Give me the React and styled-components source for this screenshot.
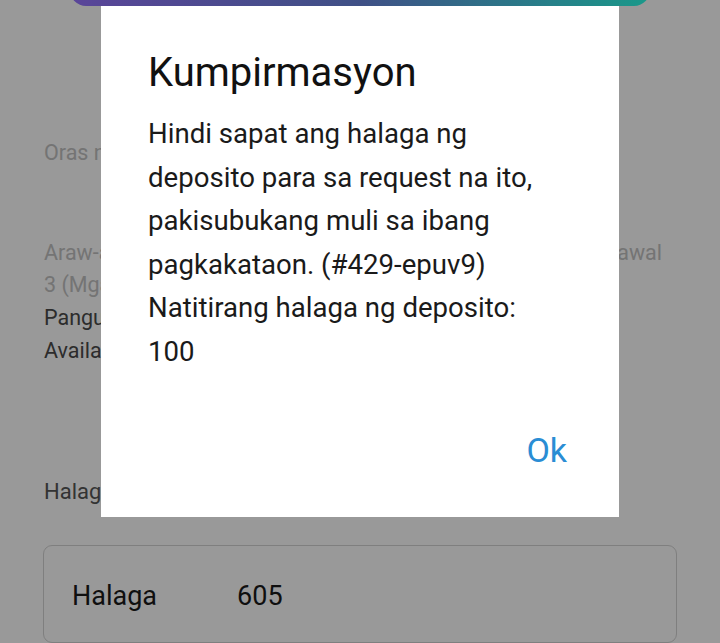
import React from 'react'
import styled, { createGlobalStyle } from 'styled-components';

const GlobalStyle = createGlobalStyle`
  html, body {
    margin:0;
    padding:0;
  }
  body {
    font-family:Roboto, "Noto Sans", Arial, sans-serif;
    background:#fff;
  }
`;

function App() {
  const message = "Hindi sapat ang halaga ng\ndeposito para sa request na ito,\npakisubukang muli sa ibang\npagkakataon. (#429-epuv9)\nNatitirang halaga ng deposito:\n100";

  return (
    <Page>
      <GlobalStyle />
      <SubmitBar />

      <Info>
        <Hint>Oras ng</Hint>
        <LimitBlock>
          <LimitRow>
            <Hint as="span">Araw-araw</Hint>
            <Hint as="span">withdrawal</Hint>
          </LimitRow>
          <Hint>3 (Mga</Hint>
          <Detail>Pangunang</Detail>
          <Detail>Available</Detail>
        </LimitBlock>
      </Info>

      <Label>Halaga</Label>
      <AmountBox>
        <span>Halaga</span>
        <AmountValue>605</AmountValue>
      </AmountBox>

      <Overlay>
        <Dialog>
          <Title>Kumpirmasyon</Title>
          <Message>{message}</Message>
          <Actions>
            <OkButton>Ok</OkButton>
          </Actions>
        </Dialog>
      </Overlay>
    </Page>
  )
}

export default App

const Page = styled.div`
  position:relative;
  width:720px;
  height:643px;
  overflow:hidden;
  background:#fff;
  display:flex;
  flex-direction:column;
`;

const SubmitBar = styled.div`
  flex:none;
  height:52px;
  margin:-46px 70px 0;
  border-radius:0 0 16px 16px;
  background:linear-gradient(90deg, #9674ff 0%, #6a86e0 50%, #2bffe6 100%);
`;

const Info = styled.div`
  padding:0 44px;
  display:flex;
  flex-direction:column;
`;

const Hint = styled.div`
  font-size:21.5px;
  line-height:32px;
  color:#c2c2c2;
  white-space:nowrap;
  &:first-child {
    margin-top:131px;
  }
`;

const LimitBlock = styled.div`
  margin-top:68px;
  display:flex;
  flex-direction:column;
  ${Hint}:first-child { margin-top:0; }
`;

const LimitRow = styled.div`
  display:flex;
  justify-content:space-between;
  padding-right:14px;
  ${Hint} { margin-top:0; }
`;

const Detail = styled.div`
  font-size:21.5px;
  line-height:33px;
  color:#4a4a4a;
  white-space:nowrap;
`;

const Label = styled.div`
  margin:109px 44px 0;
  font-size:22px;
  line-height:32px;
  color:#555;
`;

const AmountBox = styled.div`
  margin:37px 43px 0;
  height:110px;
  box-sizing:border-box;
  border:1px solid #d4d4d4;
  border-radius:9px;
  padding:4px 28px 0;
  display:flex;
  align-items:center;
  font-size:27px;
  color:#1a1a1a;
`;

const AmountValue = styled.span`
  margin-left:80px;
`;

const Overlay = styled.div`
  position:absolute;
  inset:0;
  background:rgba(0,0,0,0.4);
  display:flex;
  justify-content:center;
  align-items:flex-start;
`;

const Dialog = styled.div`
  margin-top:6px;
  width:518px;
  height:511px;
  box-sizing:border-box;
  background:#fff;
  padding:42px 52px 0 47px;
  display:flex;
  flex-direction:column;
`;

const Title = styled.h2`
  margin:0;
  font-weight:400;
  font-size:40px;
  line-height:50px;
  color:#111;
`;

const Message = styled.p`
  margin:14px 0 0;
  font-size:27.6px;
  line-height:43.5px;
  color:#1a1a1a;
  white-space:pre-line;
`;

const Actions = styled.div`
  margin-top:auto;
  padding-bottom:46px;
  display:flex;
  justify-content:flex-end;
`;

const OkButton = styled.button`
  border:none;
  background:none;
  padding:0;
  font-family:inherit;
  font-size:34px;
  line-height:42px;
  color:#2a8dd4;
  cursor:pointer;
`;
